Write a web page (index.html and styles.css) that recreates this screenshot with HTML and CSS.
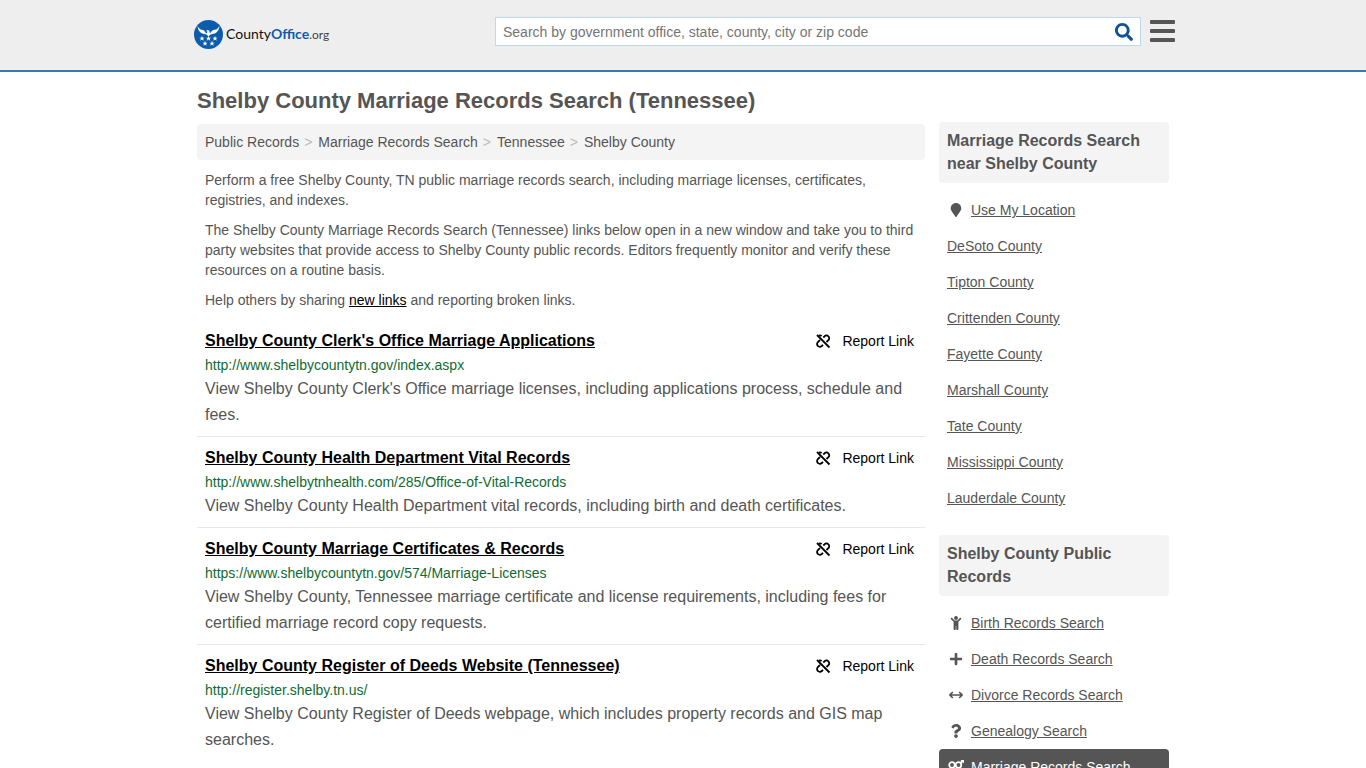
FILE: index.html
```html
<!DOCTYPE html>
<html lang="en">
<head>
  <meta charset="UTF-8">
  <meta name="viewport" content="width=device-width, initial-scale=1.0">
  <title>Shelby County Marriage Records Search (Tennessee)</title>
  <link rel="stylesheet" href="styles.css">
</head>
<body>
  <svg class="sprite" aria-hidden="true">
    <symbol id="unlink" viewBox="0 0 16 16">
      <g fill="none" stroke="currentColor" stroke-width="1.8">
        <path d="M2 2l12.500 12.500"/>
        <path d="M8.300 4.500l1.200-1.200a2.700 2.700 0 0 1 3.900 0a2.700 2.700 0 0 1 0 3.900L11.500 9"/>
        <path d="M8 11.800l-1.200 1.200a2.700 2.700 0 0 1-3.900 0a2.700 2.700 0 0 1 0-3.900L5 7"/>
        <path d="M4 2.400a2.700 2.700 0 0 1 2.600.8"/>
      </g>
    </symbol>
  </svg>

  <header class="header">
    <div class="container header-row">
      <a class="logo" href="#" aria-label="CountyOffice.org">
        <svg class="logo-mark" viewBox="0 0 58 58" aria-hidden="true">
          <circle cx="29" cy="29" r="29" fill="#0d5cab"/>
          <g fill="#fff">
            <path d="M7 12c1 9 6 15 14 16l4 1 4 4 4-4 4-1c8-1 13-7 14-16-4 6-8 8-12 8-3 1-5 3-6 6l-2-1c1-3-1-5-4-5l-3 2 3 1-1 3-2 1c-1-3-3-6-6-7-4 0-7-2-11-8z"/>
            <path id="star" d="M16 32l1.500 3.400h3.700l-3 2.300 1.200 3.700-3.400-2.200-3.400 2.200 1.200-3.700-3-2.300h3.700z"/>
            <use href="#star" x="13"/>
            <use href="#star" x="26"/>
            <use href="#star" x="6" y="10"/>
            <use href="#star" x="20" y="10"/>
          </g>
        </svg>
        <span class="logo-text">County<b>Office</b><span class="logo-org">.org</span></span>
      </a>
      <form class="search">
        <input type="search" class="search-input" aria-label="Search" placeholder="Search by government office, state, county, city or zip code">
        <button type="submit" class="search-btn" aria-label="Search">
          <svg viewBox="0 0 512 512" aria-hidden="true"><path fill="currentColor" d="M505 442.700L405.300 343c-4.500-4.500-10.600-7-17-7H372c27.600-35.300 44-79.700 44-128C416 93.100 322.900 0 208 0S0 93.100 0 208s93.100 208 208 208c48.300 0 92.700-16.400 128-44v16.300c0 6.400 2.500 12.500 7 17l99.700 99.700c9.400 9.400 24.600 9.400 33.900 0l28.300-28.300c9.400-9.400 9.400-24.600.1-34zM208 336c-70.700 0-128-57.200-128-128 0-70.700 57.200-128 128-128 70.700 0 128 57.200 128 128 0 70.700-57.200 128-128 128z"/></svg>
        </button>
      </form>
      <button type="button" class="menu-btn" aria-label="Menu"><span></span><span></span><span></span></button>
    </div>
  </header>

  <div class="container">
    <h1>Shelby County Marriage Records Search (Tennessee)</h1>
    <div class="columns">
      <main class="main">
        <nav class="breadcrumb" aria-label="Breadcrumb">
          <a href="#">Public Records</a><span>&gt;</span><a href="#">Marriage Records Search</a><span>&gt;</span><a href="#">Tennessee</a><span>&gt;</span><a href="#">Shelby County</a>
        </nav>
        <div class="intro">
          <p>Perform a free Shelby County, TN public marriage records search, including marriage licenses, certificates, registries, and indexes.</p>
          <p>The Shelby County Marriage Records Search (Tennessee) links below open in a new window and take you to third party websites that provide access to Shelby County public records. Editors frequently monitor and verify these resources on a routine basis.</p>
          <p>Help others by sharing <a href="#">new links</a> and reporting broken links.</p>
        </div>

        <article class="result">
          <div class="result-head">
            <h2><a href="#">Shelby County Clerk's Office Marriage Applications</a></h2>
            <a class="report" href="#"><svg aria-hidden="true"><use href="#unlink"/></svg>Report Link</a>
          </div>
          <div class="url">http://www.shelbycountytn.gov/index.aspx</div>
          <p>View Shelby County Clerk's Office marriage licenses, including applications process, schedule and fees.</p>
        </article>
        <article class="result">
          <div class="result-head">
            <h2><a href="#">Shelby County Health Department Vital Records</a></h2>
            <a class="report" href="#"><svg aria-hidden="true"><use href="#unlink"/></svg>Report Link</a>
          </div>
          <div class="url">http://www.shelbytnhealth.com/285/Office-of-Vital-Records</div>
          <p>View Shelby County Health Department vital records, including birth and death certificates.</p>
        </article>
        <article class="result">
          <div class="result-head">
            <h2><a href="#">Shelby County Marriage Certificates &amp; Records</a></h2>
            <a class="report" href="#"><svg aria-hidden="true"><use href="#unlink"/></svg>Report Link</a>
          </div>
          <div class="url">https://www.shelbycountytn.gov/574/Marriage-Licenses</div>
          <p>View Shelby County, Tennessee marriage certificate and license requirements, including fees for certified marriage record copy requests.</p>
        </article>
        <article class="result">
          <div class="result-head">
            <h2><a href="#">Shelby County Register of Deeds Website (Tennessee)</a></h2>
            <a class="report" href="#"><svg aria-hidden="true"><use href="#unlink"/></svg>Report Link</a>
          </div>
          <div class="url">http://register.shelby.tn.us/</div>
          <p>View Shelby County Register of Deeds webpage, which includes property records and GIS map searches.</p>
        </article>
      </main>

      <aside class="sidebar">
        <section>
          <h3>Marriage Records Search near Shelby County</h3>
          <ul>
            <li><a href="#"><svg viewBox="0 0 384 512" aria-hidden="true"><path d="M172.268 501.670C26.970 291.031 0 269.413 0 192 0 85.961 85.961 0 192 0s192 85.961 192 192c0 77.413-26.970 99.031-172.268 309.670-9.535 13.774-29.930 13.773-39.464 0z"/></svg><span>Use My Location</span></a></li>
            <li><a href="#"><span>DeSoto County</span></a></li>
            <li><a href="#"><span>Tipton County</span></a></li>
            <li><a href="#"><span>Crittenden County</span></a></li>
            <li><a href="#"><span>Fayette County</span></a></li>
            <li><a href="#"><span>Marshall County</span></a></li>
            <li><a href="#"><span>Tate County</span></a></li>
            <li><a href="#"><span>Mississippi County</span></a></li>
            <li><a href="#"><span>Lauderdale County</span></a></li>
          </ul>
        </section>
        <section>
          <h3>Shelby County Public Records</h3>
          <ul>
            <li><a href="#"><svg viewBox="0 0 384 512" aria-hidden="true"><path d="M120 72c0-39.765 32.235-72 72-72s72 32.235 72 72c0 39.764-32.235 72-72 72s-72-32.236-72-72zm254.627 1.373c-12.496-12.497-32.758-12.497-45.254 0L242.745 160H141.254L54.627 73.373c-12.496-12.497-32.758-12.497-45.254 0-12.497 12.497-12.497 32.758 0 45.255L104 213.254V480c0 17.673 14.327 32 32 32h16c17.673 0 32-14.327 32-32V368h16v112c0 17.673 14.327 32 32 32h16c17.673 0 32-14.327 32-32V213.254l94.627-94.627c12.497-12.497 12.497-32.757 0-45.254z"/></svg><span>Birth Records Search</span></a></li>
            <li><a href="#"><svg viewBox="0 0 448 512" aria-hidden="true"><path d="M416 208H272V64c0-17.670-14.330-32-32-32h-32c-17.670 0-32 14.330-32 32v144H32c-17.670 0-32 14.330-32 32v32c0 17.670 14.330 32 32 32h144v144c0 17.670 14.330 32 32 32h32c17.670 0 32-14.330 32-32V304h144c17.670 0 32-14.330 32-32v-32c0-17.670-14.330-32-32-32z"/></svg><span>Death Records Search</span></a></li>
            <li><a href="#"><svg viewBox="0 0 512 512" aria-hidden="true"><path d="M40 256h432M140 146L32 256l108 110M372 146l108 110-108 110" fill="none" stroke="currentColor" stroke-width="60"/></svg><span>Divorce Records Search</span></a></li>
            <li><a href="#"><svg viewBox="0 0 384 512" aria-hidden="true"><path d="M202.021 0C122.202 0 70.503 32.703 29.914 91.026c-7.363 10.580-5.093 25.086 5.178 32.874l43.138 32.709c10.373 7.865 25.132 6.026 33.253-4.148 25.049-31.381 43.630-49.449 82.757-49.449 30.764 0 68.816 19.799 68.816 49.631 0 22.552-18.617 34.134-48.993 51.164-35.423 19.860-82.299 44.576-82.299 106.405V320c0 13.255 10.745 24 24 24h72.471c13.255 0 24-10.745 24-24v-5.773c0-42.860 125.268-44.645 125.268-160.627C377.504 66.256 286.902 0 202.021 0zM192 373.459c-38.196 0-69.271 31.075-69.271 69.271 0 38.195 31.075 69.270 69.271 69.270s69.271-31.075 69.271-69.271-31.075-69.270-69.271-69.270z"/></svg><span>Genealogy Search</span></a></li>
            <li><a class="active" href="#" aria-current="page"><svg viewBox="0 0 18 14" aria-hidden="true"><g fill="none" stroke="currentColor" stroke-width="1.800"><circle cx="5" cy="5" r="2.800"/><circle cx="11.500" cy="5" r="2.800"/><path d="M5 8v5M3 11h4M13.500 3L16 .8"/></g><path d="M13.500 0H17v3.500z"/></svg><span>Marriage Records Search</span></a></li>
          </ul>
        </section>
      </aside>
    </div>
  </div>
</body>
</html>
```

FILE: styles.css
```css
* {
  box-sizing: border-box;
}
body {
  margin: 0;
  height: 100vh;
  overflow: hidden;
  font-family: Arial, "Liberation Sans", sans-serif;
  font-size: 14px;
  line-height: 20px;
  color: #555;
  background: #fff;
}
h1, h2, h3, p, ul {
  margin: 0;
  padding: 0;
}
.sprite {
  display: none;
}
.container {
  max-width: 980px;
  margin: 0 auto;
  padding: 0 4px;
}

/* header */
.header {
  background: #eee;
  border-bottom: 2px solid #337ab7;
}
.header-row {
  display: flex;
  align-items: flex-start;
  height: 70px;
  padding: 17px 0 0 1px;
}
.logo {
  display: flex;
  align-items: center;
  gap: 3px;
  height: 35px;
  width: 301px;
  color: #111;
  text-decoration: none;
}
.logo-mark {
  width: 29px;
  height: 29px;
}
.logo-text {
  font-family: Lato, sans-serif;
  font-size: 14px;
}
.logo-text b {
  color: #0d5cab;
}
.logo-org {
  font-size: 12px;
  color: #444;
}
.search {
  display: flex;
  flex: 1;
  height: 29px;
  background: #fff;
  border: 1px solid #bcd9ee;
}
.search-input {
  flex: 1;
  padding: 0 7px;
  border: 0;
  background: none;
  font: inherit;
  color: #555;
}
.search-input::placeholder {
  color: #757575;
}
.search-btn {
  display: flex;
  align-items: center;
  padding: 0 7px;
  border: 0;
  background: none;
  color: #0d5299;
}
.search-btn svg {
  width: 18px;
  height: 18px;
}
.menu-btn {
  display: flex;
  flex-direction: column;
  gap: 5px;
  width: 23px;
  padding: 3px 0 0;
  margin-left: 9px;
  border: 0;
  background: none;
}
.menu-btn span {
  width: 25px;
  height: 4px;
  border-radius: 1px;
  background: #555;
}

/* page */
h1 {
  padding: 15px 0 7px;
  font-size: 22px;
  line-height: 28px;
}
.columns {
  display: flex;
  gap: 14px;
}
.main {
  flex: 1;
  padding-top: 2px;
}
.breadcrumb {
  padding: 8px;
  border-radius: 4px;
  background: #f4f4f4;
}
.breadcrumb a {
  color: #555;
  text-decoration: none;
}
.breadcrumb span {
  margin: 0 6px 0 5px;
  color: #bbb;
}
.intro {
  padding: 10px 8px;
}
.intro p + p {
  margin-top: 10px;
}
.intro a {
  color: #000;
}
.result {
  padding: 8px;
  border-bottom: 1px solid #e7e7e7;
}
.result:last-child {
  border-bottom: 0;
}
.result-head {
  display: flex;
  justify-content: space-between;
  line-height: 26px;
}
.result h2 {
  font-size: 16px;
}
.result a {
  color: #000;
}
.result .report {
  display: flex;
  align-items: center;
  gap: 11px;
  padding-right: 3px;
  text-decoration: none;
}
.report svg {
  width: 16px;
  height: 16px;
}
.url {
  line-height: 22px;
  color: #0f6b31;
}
.result p {
  font-size: 16px;
  line-height: 26px;
}

/* sidebar */
.sidebar {
  width: 230px;
}
.sidebar h3 {
  padding: 7px 8px 8px;
  margin-bottom: 9px;
  border-radius: 4px;
  background: #f4f4f4;
  font-size: 16px;
  line-height: 23px;
}
.sidebar section + section {
  margin-top: 19px;
}
.sidebar ul {
  list-style: none;
}
.sidebar li a {
  display: flex;
  align-items: center;
  gap: 6px;
  padding: 8px;
  border-radius: 4px;
  color: #555;
  text-decoration: none;
}
.sidebar li span {
  text-decoration: underline;
}
.sidebar li svg {
  width: 18px;
  height: 14px;
  fill: currentColor;
}
.sidebar li .active {
  background: #555;
  color: #fff;
}
```
